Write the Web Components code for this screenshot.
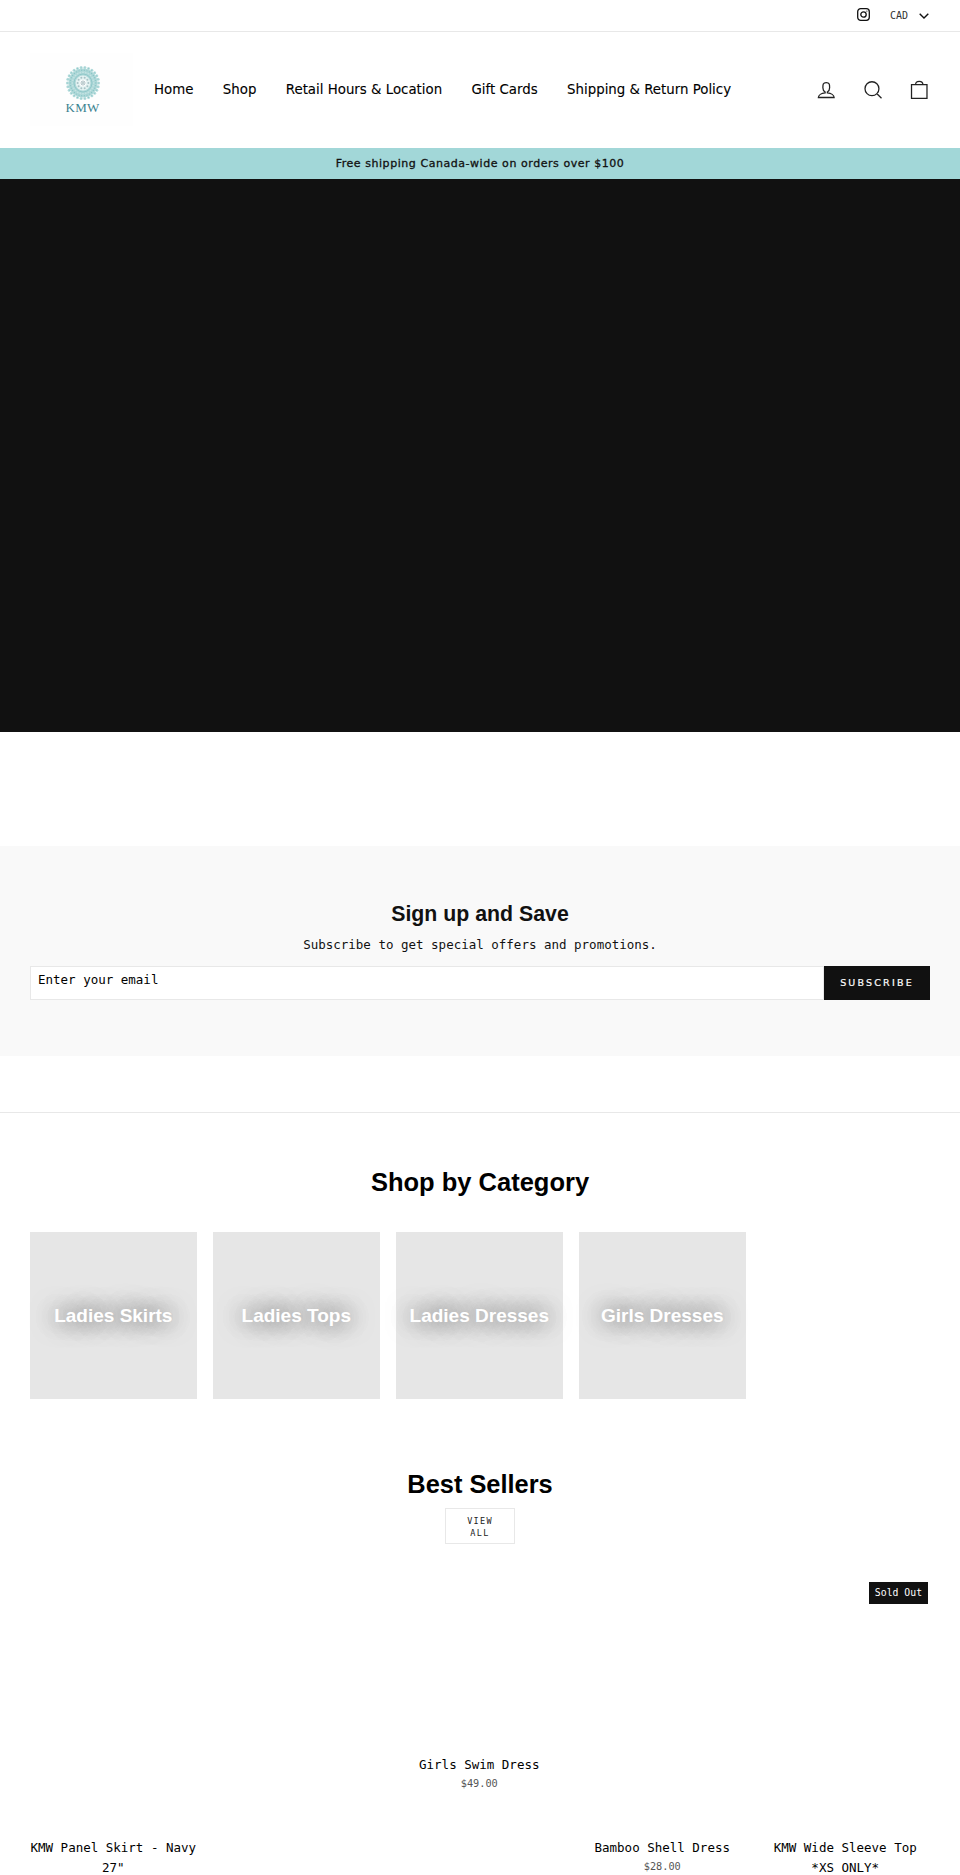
<!DOCTYPE html>
<html lang="en">
<head>
<meta charset="utf-8">
<title>KMW</title>
<style>
  html, body { margin: 0; height: 1875px; overflow: hidden; background: #fff; }
  body { font-family: "DejaVu Sans Mono", monospace; color: #000; }
</style>
</head>
<body>
<site-topbar></site-topbar>
<site-header></site-header>
<announce-bar>Free shipping Canada-wide on orders over $100</announce-bar>
<hero-block></hero-block>
<signup-block></signup-block>
<category-section>
  <category-tile>Ladies Skirts</category-tile>
  <category-tile>Ladies Tops</category-tile>
  <category-tile>Ladies Dresses</category-tile>
  <category-tile>Girls Dresses</category-tile>
</category-section>
<product-section>
  <product-card></product-card>
  <product-card></product-card>
  <product-card title-text="Girls Swim Dress" price="$49.00"></product-card>
  <product-card></product-card>
  <product-card sold-out></product-card>
  <product-card no-image title-text='KMW Panel Skirt - Navy 27"'></product-card>
  <product-card no-image></product-card>
  <product-card no-image></product-card>
  <product-card no-image title-text="Bamboo Shell Dress" price="$28.00"></product-card>
  <product-card no-image title-text="KMW Wide Sleeve Top *XS ONLY*"></product-card>
</product-section>

<script>
// shared helper, every element fills its shadow root from a string
class BaseEl extends HTMLElement {
  render(html) {
    const root = this.attachShadow({ mode: "open" });
    const tpl = document.createElement("template");
    tpl.innerHTML = html;
    root.appendChild(tpl.content.cloneNode(true));
  }
}

// ring of small circles, used for the petals of the logo mandala
function petals(count, radius, size, attrs) {
  let out = "";
  for (let i = 0; i < count; i++) {
    const a = (i / count) * Math.PI * 2;
    const x = (18 + Math.cos(a) * radius).toFixed(2);
    const y = (18 + Math.sin(a) * radius).toFixed(2);
    out += `<circle cx="${x}" cy="${y}" r="${size}" ${attrs}/>`;
  }
  return out;
}

class SiteTopbar extends BaseEl {
  constructor() {
    super();
    this.render(`
    <style>
      :host {
        display: flex; justify-content: flex-end; align-items: center;
        height: 31px; border-bottom: 1px solid #e8e8e8; padding-right: 30px;
        font-family: "DejaVu Sans Mono", monospace; color: #111;
      }
      .ig { width: 13px; height: 13px; margin-right: 20px; margin-top: -2px; }
      .cad { font-size: 10px; color: #333; margin-right: 11px; }
      .chev { width: 10px; height: 6px; margin-right: 1px; }
    </style>
    <svg class="ig" viewBox="0 0 13 13" fill="none" stroke="#111" stroke-width="1.3">
      <rect x=".7" y=".7" width="11.6" height="11.6" rx="3"/>
      <circle cx="6.5" cy="6.5" r="2.7"/>
      <circle cx="9.9" cy="3.1" r=".6" fill="#111" stroke="none"/>
    </svg>
    <span class="cad">CAD</span>
    <svg class="chev" viewBox="0 0 10 6" fill="none" stroke="#111" stroke-width="1.4">
      <path d="M.7.8L5 5l4.3-4.2"/>
    </svg>
    `);
  }
}

class SiteHeader extends BaseEl {
  constructor() {
    super();
    this.render(`
    <style>
      :host {
        display: flex; align-items: center; height: 115px;
        padding-left: 30px; padding-right: 17.25px;
        font-family: "DejaVu Sans", sans-serif;
      }
      .logo {
        width: 103px; height: 73px; background: #fefefe; flex: none;
        display: flex; flex-direction: column; align-items: center;
        font-family: "Liberation Serif", serif; font-size: 13px; color: #3b8391;
        letter-spacing: .2px; margin-top: -1px; padding-left: 2px; box-sizing: border-box;
      }
      .logo svg { width: 36px; height: 36px; margin-top: 12px; }
      .logo span { line-height: 14px; margin-top: 0; }
      nav {
        display: flex; flex: 1; margin-left: 21px; gap: 29.4px; font-size: 13.35px; color: #000;
        -webkit-text-stroke: .1px #000;
      }
      .icons { display: flex; align-items: center; margin-top: 1px; }
      .icons svg {
        width: 24px; height: 24px; padding: 0 11.25px; display: block;
        fill: none; stroke: #222; stroke-width: 3.4;
      }
    </style>
    <div class="logo">
      <svg viewBox="0 0 36 36" fill="none">
        ${petals(26, 15.6, 1.5, 'fill="#b4dcdc"')}
        ${petals(26, 15.4, .55, 'fill="#8ec6c8"')}
        <circle cx="18" cy="18" r="14.6" fill="#aed8d8"/>
        ${petals(30, 12.8, .7, 'fill="#8cc5c7"')}
        ${petals(24, 10.6, .8, 'fill="#c6e4e4"')}
        <circle cx="18" cy="18" r="9" stroke="#8cc5c7" stroke-width=".9"/>
        <circle cx="18" cy="18" r="7.4" fill="#e4f2f2"/>
        ${petals(10, 5.4, 1, 'fill="#a9c3c6"')}
        <circle cx="18" cy="18" r="3.4" fill="#fbfdfd"/>
        <circle cx="18" cy="18" r="2" stroke="#7d9ba1" stroke-width=".6"/>
        <circle cx="18" cy="18" r=".7" fill="#5d7f86"/>
      </svg>
      <span>KMW</span>
    </div>
    <nav>
      <span>Home</span><span>Shop</span><span>Retail Hours &amp; Location</span>
      <span>Gift Cards</span><span>Shipping &amp; Return Policy</span>
    </nav>
    <div class="icons">
      <svg viewBox="0 0 64 64"><path d="M35 39.84v-2.53c3.3-1.91 6-6.66 6-11.41 0-7.63 0-13.82-9-13.82s-9 6.19-9 13.82c0 4.75 2.7 9.51 6 11.41v2.53c-10.18.85-18 6-18 12.16h42c0-6.19-7.82-11.31-18-12.16z"/></svg>
      <svg viewBox="0 0 64 64"><path d="M47.16 28.58A18.58 18.58 0 1 1 28.58 10a18.58 18.58 0 0 1 18.58 18.58zM54 54L41.94 42"/></svg>
      <svg viewBox="0 0 64 64"><path d="M11.375 17.863h41.25v36.75h-41.25z"/><path d="M22.25 18c0-7.105 4.35-9 9.75-9s9.75 1.895 9.75 9"/></svg>
    </div>
    `);
  }
}

class AnnounceBar extends BaseEl {
  constructor() {
    super();
    this.render(`
    <style>
      :host {
        display: flex; justify-content: center; align-items: center; height: 31px;
        background: #a2d7d8; color: #111; font-family: "DejaVu Sans", sans-serif;
        font-size: 11px; font-weight: 400; letter-spacing: .55px;
        -webkit-text-stroke: .3px #111; margin-top: 1px;
      }
    </style>
    <slot></slot>
    `);
  }
}

class HeroBlock extends BaseEl {
  constructor() {
    super();
    this.render(`<style>:host { display: block; height: 553px; background: #111; }</style>`);
  }
}

class SignupBlock extends BaseEl {
  constructor() {
    super();
    this.render(`
    <style>
      :host {
        display: block; margin-top: 114px; height: 210px; background: #f9f9f9;
        padding: 54px 30px 0; box-sizing: border-box; text-align: center; color: #111;
      }
      h3 { margin: 0; font: bold 21.3px/28px "Liberation Sans", sans-serif; }
      p { margin: 8px 0 0; font: 12.5px/18px "DejaVu Sans Mono", monospace; }
      form { display: flex; margin-top: 12px; height: 34px; }
      .field {
        flex: 1; box-sizing: border-box; border: 1px solid #e8e8e8; background: #fff;
        text-align: left; padding: 5px 7px; font: 12.5px/16px "DejaVu Sans Mono", monospace; color: #000;
      }
      .btn {
        width: 106px; background: #111; color: #fff; display: flex; align-items: center; justify-content: center;
        font: 9.5px/1 "DejaVu Sans", sans-serif; letter-spacing: 2.2px; -webkit-text-stroke: .2px #fff;
      }
    </style>
    <h3>Sign up and Save</h3>
    <p>Subscribe to get special offers and promotions.</p>
    <form><div class="field">Enter your email</div><div class="btn">SUBSCRIBE</div></form>
    `);
  }
}

class CategorySection extends BaseEl {
  constructor() {
    super();
    this.render(`
    <style>
      :host { display: block; margin-top: 56px; border-top: 1px solid #e8e8e8; padding: 53px 30px 0; }
      h2 { margin: 0; text-align: center; font: bold 25.5px/32px "Liberation Sans", sans-serif; color: #000; }
      .grid { display: grid; grid-template-columns: repeat(5, 166.6px); gap: 16.4px; margin-top: 34px; }
    </style>
    <h2>Shop by Category</h2>
    <div class="grid"><slot></slot></div>
    `);
  }
}

class CategoryTile extends BaseEl {
  constructor() {
    super();
    this.render(`
    <style>
      :host {
        display: flex; align-items: center; justify-content: center; height: 166.6px;
        box-sizing: border-box; padding-top: 2px;
        background: #e6e6e6; color: #fff; text-align: center;
        font: bold 19px/24px "Liberation Sans", sans-serif;
        text-shadow: 0 0 24px rgba(0,0,0,.65), 0 0 24px rgba(0,0,0,.3);
      }
    </style>
    <slot></slot>
    `);
  }
}

class ProductSection extends BaseEl {
  constructor() {
    super();
    this.render(`
    <style>
      :host { display: block; padding: 69px 30px 0; text-align: center; }
      h2 { margin: 0; font: bold 25.4px/32px "Liberation Sans", sans-serif; color: #000; }
      .view {
        display: block; width: 70px; height: 36px; box-sizing: border-box; margin: 8px auto 0;
        border: 1px solid #e8e8e8; padding: 6px 0;
        font: 8.5px/12px "DejaVu Sans Mono", monospace; letter-spacing: 1.3px; color: #222;
      }
      .grid { display: grid; grid-template-columns: repeat(5, 166.6px); gap: 0 16.4px; margin-top: 27px; }
    </style>
    <h2>Best Sellers</h2>
    <div class="view">VIEW<br>ALL</div>
    <div class="grid"><slot></slot></div>
    `);
  }
}

class ProductCard extends BaseEl {
  constructor() {
    super();
    const title = this.getAttribute("title-text") || "";
    const price = this.getAttribute("price") || "";
    this.render(`
    <style>
      :host { display: block; position: relative; text-align: center; color: #000; padding-bottom: 47px; }
      :host([no-image]) .img { display: none; }
      .img { height: 184px; }
      .name { font: 12.5px/20px "DejaVu Sans Mono", monospace; min-height: 20px; }
      .price { font: 10.25px/16px "DejaVu Sans Mono", monospace; color: #555; min-height: 16px; }
      .badge {
        position: absolute; top: 11px; right: 1px; background: #111; color: #fff;
        font: 9.8px/22px "DejaVu Sans Mono", monospace; padding: 0 5.5px;
      }
    </style>
    ${this.hasAttribute("sold-out") ? '<div class="badge">Sold Out</div>' : ""}
    <div class="img"></div>
    <div class="name">${title}</div>
    <div class="price">${price}</div>
    `);
  }
}

customElements.define("site-topbar", SiteTopbar);
customElements.define("site-header", SiteHeader);
customElements.define("announce-bar", AnnounceBar);
customElements.define("hero-block", HeroBlock);
customElements.define("signup-block", SignupBlock);
customElements.define("category-section", CategorySection);
customElements.define("category-tile", CategoryTile);
customElements.define("product-section", ProductSection);
customElements.define("product-card", ProductCard);
</script>
</body>
</html>
